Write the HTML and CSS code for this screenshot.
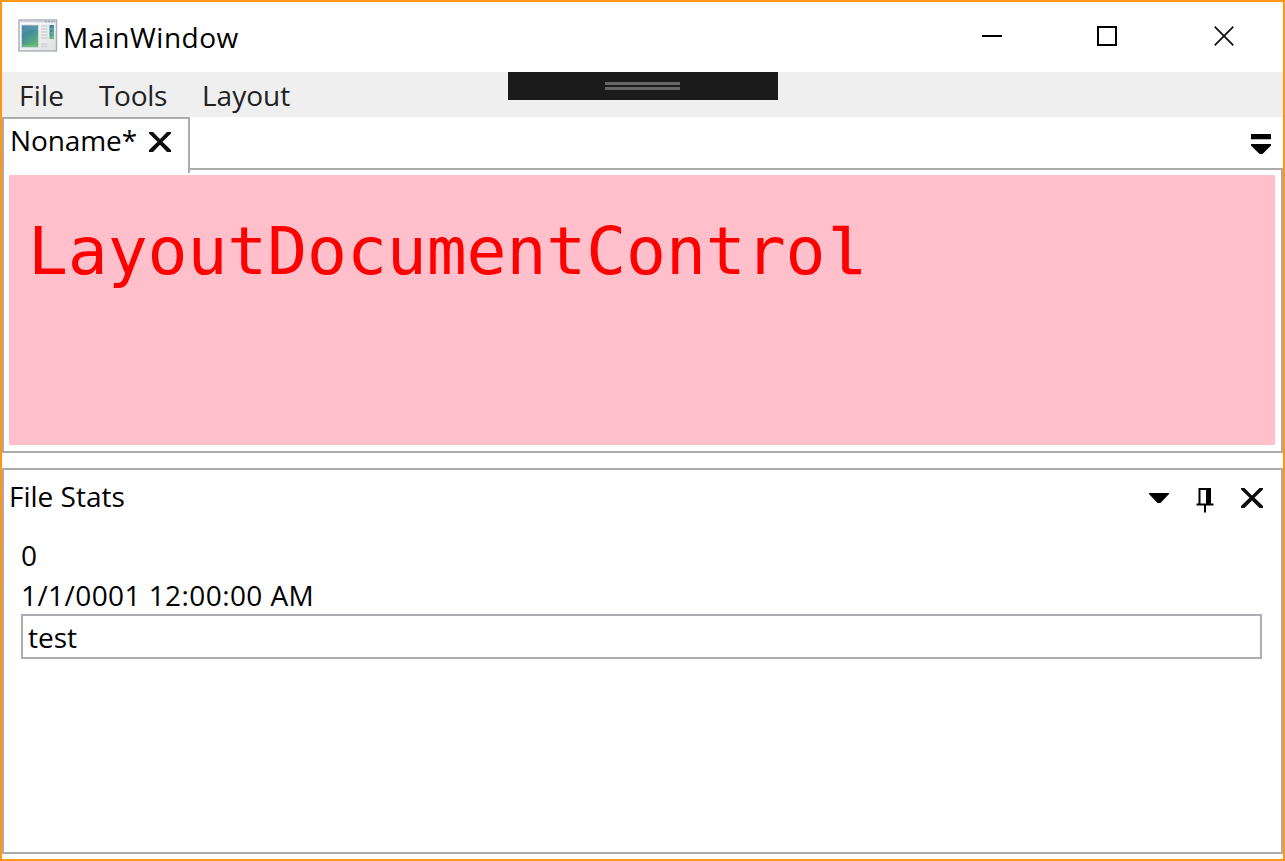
FILE: index.html
```html
<!DOCTYPE html>
<html lang="en">
<head>
<meta charset="utf-8">
<title>MainWindow</title>
<link rel="stylesheet" href="styles.css">
</head>
<body>
<div class="window">
  <header class="titlebar">
    <svg class="app-icon" width="40" height="34" viewBox="0 0 40 34">
      <defs>
        <linearGradient id="screen" x1="0" y1="0" x2="0.6" y2="1"><stop offset="0" stop-color="#3b78a6"/><stop offset="0.5" stop-color="#448f9a"/><stop offset="1" stop-color="#62b574"/></linearGradient>
        <linearGradient id="frame" x1="0" y1="0" x2="1" y2="1"><stop offset="0" stop-color="#ffffff"/><stop offset="1" stop-color="#dedfe1"/></linearGradient>
      </defs>
      <rect x="1" y="1" width="37.500" height="31" fill="url(#frame)" stroke="#a9adb3" stroke-width="1.400"/>
      <path d="M2 2.500H38" stroke="#c9d0d8" stroke-width="1.600"/>
      <path d="M27 2.500H37" stroke="#98a0a8" stroke-width="1.400" stroke-dasharray="2 1"/>
      <rect x="3.500" y="6" width="17" height="22.500" fill="url(#screen)" stroke="#d3dce2" stroke-width=".8"/>
      <path d="M3.500 15Q11 9 20.500 11V6H3.500Z" fill="#fff" opacity=".1"/>
      <path d="M4 27H20" stroke="#8ed18c" stroke-width=".7"/>
      <path d="M23 7H29.500M23 10H29.500M23 13H29.500M23 16H29.500M23 19H29.500M23 25H29.500M23 27.500H29.500" stroke="#ced1d3" stroke-width="1.300"/>
      <rect x="31.500" y="6" width="4.500" height="14" fill="url(#screen)"/>
      <path d="M31.500 10H36M31.500 14H36M31.500 18H36" stroke="#9cc9c3" stroke-width=".6"/>
    </svg>
    <span class="title">MainWindow</span>
    <div class="caption-buttons">
      <svg width="20" height="20" viewBox="0 0 20 20"><path d="M0 10H20" stroke="#000" stroke-width="2"/></svg>
      <svg class="maximize" width="20" height="20" viewBox="0 0 20 20"><rect x="1" y="1" width="18" height="18" fill="none" stroke="#000" stroke-width="2"/></svg>
      <svg width="20" height="20" viewBox="0 0 20 20"><path d="M.7 .7L19.300 19.300M19.300 .7L.7 19.300" stroke="#111" stroke-width="1.800"/></svg>
    </div>
  </header>
  <nav class="menubar">
    <span class="m-file">File</span><span class="m-tools">Tools</span><span class="m-layout">Layout</span>
    <div class="debug-bar"><i></i><i></i></div>
  </nav>
  <div class="tabstrip">
    <div class="tab">
      <span class="t-tab">Noname*</span>
      <svg class="tab-close" width="24" height="22" viewBox="0 0 24 22"><path d="M1 1H5L12 8L19 1H23V2.500L14.500 10.800L23 19V21H19L12 13.800L5 21H1V19L9.500 10.800L1 2.500Z" fill="#0c0c0c"/></svg>
    </div>
    <svg class="tab-menu" width="22" height="22" viewBox="0 0 22 22"><path d="M1 1H21V6.200H1ZM1 11H21V12.500L12.500 21H9.500L1 12.500Z"/></svg>
  </div>
  <main class="document"><div class="canvas">LayoutDocumentContro<span class="doc-l">l</span></div></main>
  <section class="stats">
    <div class="stats-head">
      <span class="t-stats">File Stats</span>
      <div class="tools">
        <svg width="22" height="12" viewBox="0 0 22 12"><path d="M1 1H21V2L12.500 11H9.500L1 2Z"/></svg>
        <svg class="pin" width="18" height="26" viewBox="0 0 18 26"><path d="M3.500 17V2H14V17M.5 17.500H17.500M9 17V25.500" fill="none" stroke="#000" stroke-width="2"/><path d="M10 1H15V17H10Z"/></svg>
        <svg width="24" height="22" viewBox="0 0 24 22"><path d="M1 1H4.500L12 8.400L19.500 1H23V2.500L14.500 10.800L23 19V21H19.500L12 13.400L4.500 21H1V19L9.500 10.800L1 2.500Z" fill="#0c0c0c"/></svg>
      </div>
    </div>
    <div class="stats-body">
      <div class="row">0</div>
      <div class="row t-date">1/1/0001 12:00:00 AM</div>
      <div class="field">test</div>
    </div>
  </section>
</div>
</body>
</html>
```
FILE: styles.css
```css
* { box-sizing: border-box; }
body { margin: 0; background: #fff; color: #000; font: 28px/40px "Open Sans", "Noto Sans", sans-serif; }
svg { display: block; flex: none; }
.window { width: 1285px; height: 861px; border: 2px solid #ff9618; display: flex; flex-direction: column; overflow: hidden; white-space: nowrap; }
.titlebar { height: 70px; flex: none; display: flex; align-items: center; padding: 0 49px 2px 16px; }
.title { margin-left: 5px; padding-top: 2px; letter-spacing: .5px; }
.caption-buttons { margin-left: auto; display: flex; gap: 96px; }
.maximize { margin: 0 1px 0 -1px; }
.menubar { height: 45px; flex: none; background: #efefef; color: #212121; display: flex; align-items: center; padding: 0 0 0 17px; position: relative; }
.m-file { width: 80px; letter-spacing: .2px; }
.m-tools { width: 103px; letter-spacing: -.3px; }
.debug-bar { position: absolute; left: 506px; top: 0; width: 270px; height: 28px; background: #1b1b1b; display: flex; flex-direction: column; padding: 10px 0 0 97px; gap: 2px; }
.debug-bar i { width: 75px; height: 3px; background: #666; }
.tabstrip { height: 51px; flex: none; display: flex; align-items: flex-start; justify-content: space-between; padding-right: 11px; position: relative; z-index: 1; }
.tab { width: 188px; height: 56px; background: #fff; border: 2px solid #ababab; border-bottom: 0; display: flex; padding: 1px 0 0 6px; }
.t-tab { width: 138px; letter-spacing: -.1px; }
.tab-close { margin-top: 11px; }
.tab-menu { margin-top: 16px; }
.document { height: 285px; flex: none; border: 2px solid #ababab; padding: 5px 6px 6px 5px; }
.canvas { height: 270px; background: #ffbfcb; color: #f00; padding: 36px 0 0 19px; font: 66.400px/80px "DejaVu Sans Mono", monospace; letter-spacing: -.1px; }
.doc-l { margin-left: -1px; font-family: "Liberation Mono", monospace; -webkit-text-stroke: .7px #f00; }
.stats { height: 386px; flex: none; margin-top: 15px; border: 2px solid #ababab; }
.stats-head { height: 64px; display: flex; justify-content: space-between; padding: 6px 17px 0 5px; }
.tools { display: flex; gap: 25px; height: 44px; align-items: center; }
.tools svg:first-child { margin-right: 1px; }
.pin { margin-top: 3px; margin-right: 1px; }
.stats-body { padding: 1px 19px 0 17px; }
.row { height: 40px; }
.t-date { letter-spacing: .42px; }
.field { height: 45px; margin-top: -1px; border: 2px solid #abadb3; padding: 1px 5px; line-height: 40px; }
```
